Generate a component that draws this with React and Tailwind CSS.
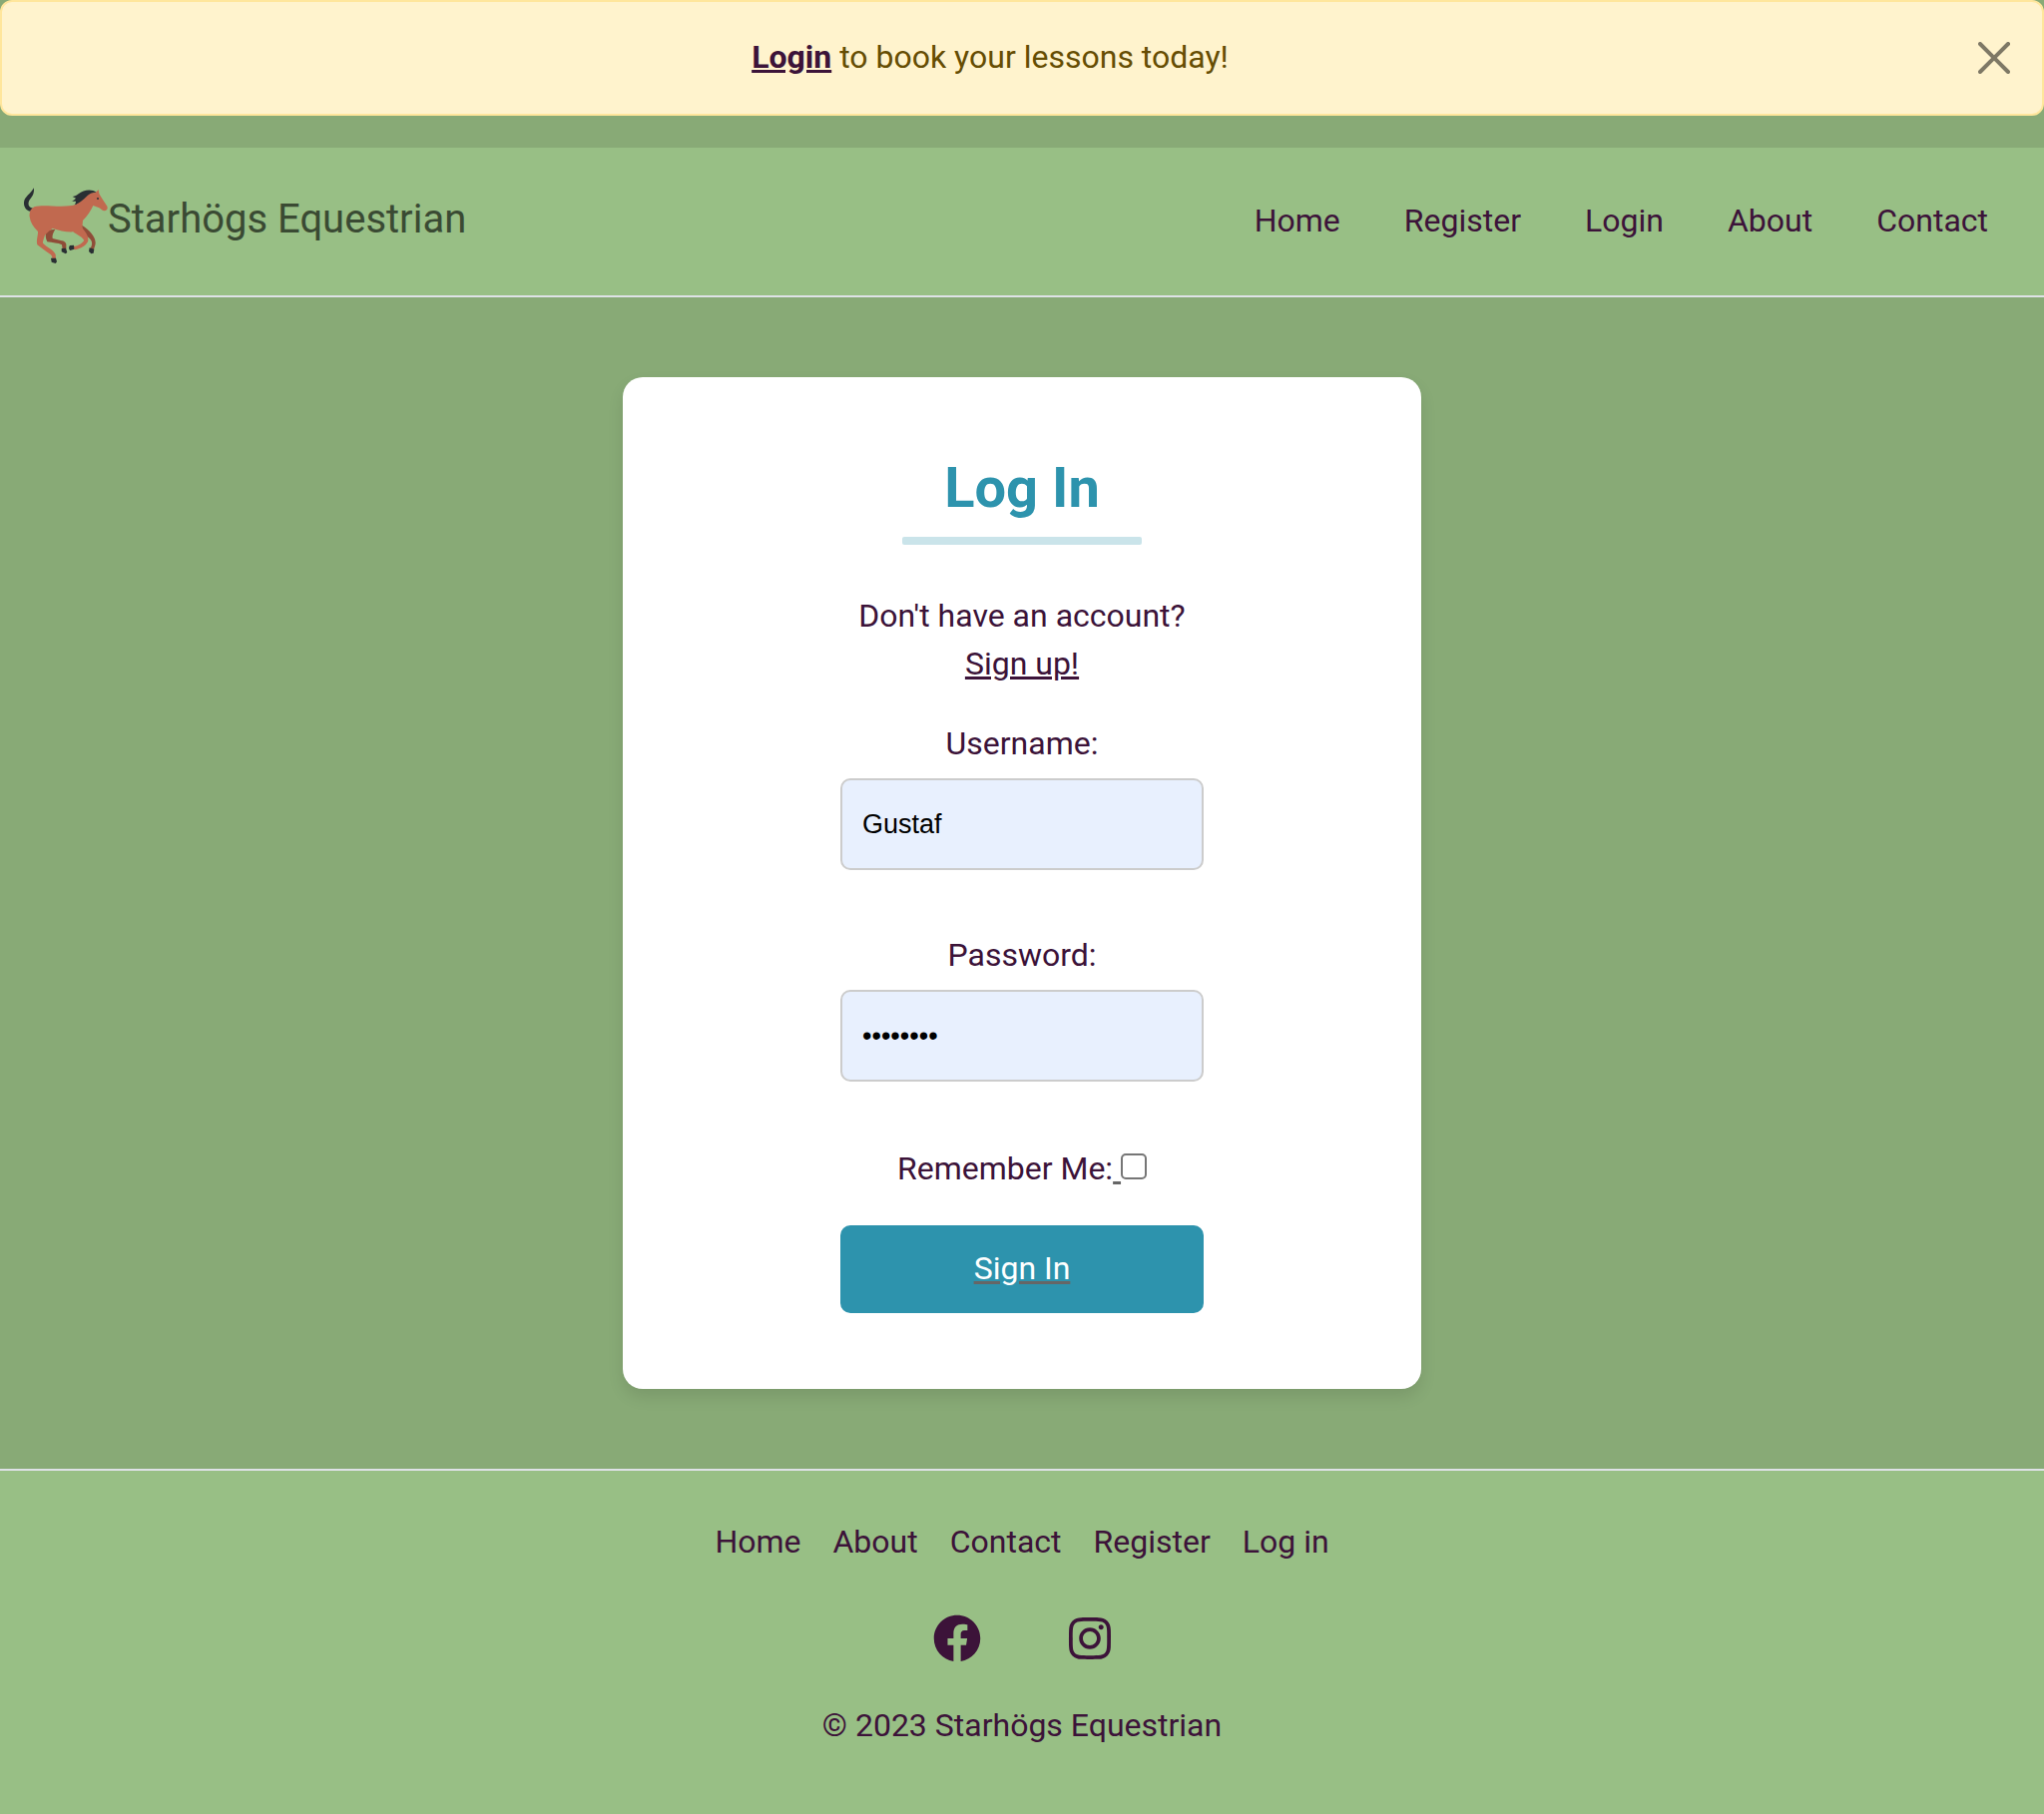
import { FaFacebook, FaInstagram } from "react-icons/fa";

const navLinks = ["Home", "Register", "Login", "About", "Contact"];
const footerLinks = ["Home", "About", "Contact", "Register", "Log in"];

function Horse() {
  return (
    <svg viewBox="42 15 252 252" className="size-[84px] shrink-0 overflow-visible" aria-hidden="true">
      <path fill="#8f4c38" d="M109 168 C106 182 107 192 112 202 C128 205 145 205 156 211 L158 224 L169 223 L169 209 C166 202 162 200 156 199 L128 192 C126 182 130 174 136 164 Z" />
      <path fill="#8f4c38" d="M216 152 C238 166 256 184 257 204 C257 212 254 218 252 225 L241 223 C247 213 248 205 244 198 C240 190 226 184 218 172 Z" />
      <path fill="#292f33" d="M72 40 C62 58 44 66 42 83 C41 98 50 108 61 110 L70 101 C59 100 54 92 56 83 C58 72 74 66 72 40 Z" />
      <path fill="#292f33" d="M260 53 C245 42 221 45 206 58 C199 64 193 66 188 66 L198 71 C193 76 189 79 185 80 L198 80 C198 85 196 89 193 92 C208 89 225 76 236 63 C244 56 252 54 260 53 Z" />
      <path fill="#c1694f" d="M257 54 C260 51 263 49 266 45 C267 51 267 55 269 59 C275 69 284 82 292 95 C295 102 291 108 284 109 C277 109 275 103 268 100 L250 93 C243 109 234 122 219 138 L217 160 C230 176 238 188 234 202 C228 213 213 223 196 226 L184 221 L186 216 C201 216 213 211 223 198 C216 185 198 180 190 172 C170 173 148 169 128 161 C119 170 106 176 103 188 C100 197 98 203 99 206 C111 219 132 226 137 240 L138 254 L127 254 C128 240 119 238 108 230 L82 211 C78 199 85 181 84 171 C70 158 61 144 59 127 C57 113 62 103 73 97 C103 88 140 100 186 93 C206 90 219 76 234 62 C241 56 249 54 257 54 Z" />
      <path fill="#292f33" d="M123 251 L138 251 L141 262 L137 267 L125 263 Z" />
      <path fill="#292f33" d="M155 222 L168 221 L172 234 L167 238 L155 232 Z" />
      <path fill="#292f33" d="M192 212 L193 224 L181 228 C176 226 176 217 180 213 Z" />
      <path fill="#292f33" d="M239 220 L253 224 L251 236 L244 238 L237 231 Z" />
      <circle cx="264" cy="72" r="3" fill="#292f33" />
    </svg>
  );
}

function Field({ id, label, type, value, autoComplete }) {
  return (
    <div className="flex flex-col items-center gap-[11px]">
      <label htmlFor={id}>{label}</label>
      <input
        id={id}
        type={type}
        defaultValue={value}
        autoComplete={autoComplete}
        className="h-[92px] w-[364px] rounded-[10px] border-2 border-[#ccc] bg-[#e8f0fe] px-5 font-['Liberation_Sans',Arial,sans-serif] text-[27px] text-black"
      />
    </div>
  );
}

export default function App() {
  return (
    <div className="flex min-h-screen flex-col bg-[#88aa76] font-[Roboto,sans-serif] text-[32px] leading-[48px] text-[#3c1339]">
      <div role="alert" className="mb-8 flex items-center rounded-xl border-2 border-[#ffe69c] bg-[#fff3cd] px-8 py-8 text-[#664d03]">
        <p className="flex-1 pb-0.5 text-center leading-[46px]">
          <a href="#login" className="font-bold text-[#3c1339] underline">Login</a> to book your lessons today!
        </p>
        <button type="button" aria-label="Close" className="ml-8 opacity-50">
          <svg viewBox="0 0 16 16" className="size-8" fill="#000">
            <path d="M.293.293a1 1 0 0 1 1.414 0L8 6.586 14.293.293a1 1 0 1 1 1.414 1.414L9.414 8l6.293 6.293a1 1 0 0 1-1.414 1.414L8 9.414l-6.293 6.293a1 1 0 0 1-1.414-1.414L6.586 8 .293 1.707a1 1 0 0 1 0-1.414z" />
          </svg>
        </button>
      </div>

      <header className="flex items-center justify-between border-b-2 border-[#dee2e6] bg-[#98bf85] py-8 pr-14 pl-6">
        <a href="#home" className="flex items-center text-[40px] text-[#3a4a33]">
          <Horse />
          <span className="pb-1">Starhögs Equestrian</span>
        </a>
        <nav className="flex gap-16 pb-0.5">
          {navLinks.map((name) => (
            <a key={name} href={`#${name.toLowerCase()}`}>{name}</a>
          ))}
        </nav>
      </header>

      <main className="flex justify-center py-20">
        <form className="flex w-[800px] flex-col items-center rounded-[20px] bg-white pt-20 pb-[76px] text-center shadow-[0_8px_16px_rgba(0,0,0,0.1)]">
          <h1 className="text-[56px] leading-[62px] font-bold text-[#2d93ad]">Log In</h1>
          <div className="mt-[18px] h-2 w-60 rounded-[2px] bg-[#cae4ea]" />
          <p className="mt-[47px] mb-8">
            Don't have an account?
            <br />
            <a href="#signup" className="underline">Sign up!</a>
          </p>
          <div className="flex flex-col gap-[61px]">
            <Field id="username" label="Username:" type="text" value="Gustaf" autoComplete="username" />
            <Field id="password" label="Password:" type="password" value="password" autoComplete="current-password" />
          </div>
          <div className="mt-[63px] flex items-center">
            <label htmlFor="remember">Remember Me:</label>
            <span className="whitespace-pre underline decoration-[#666]"> </span>
            <input
              id="remember"
              type="checkbox"
              className="mb-1 size-[26px] appearance-none rounded-[5px] border-2 border-[#767676] bg-white checked:bg-[#2d93ad]"
            />
          </div>
          <button
            type="submit"
            className="mt-[33px] h-[88px] w-[364px] rounded-[10px] bg-[#2d93ad] pb-0.5 text-white underline decoration-[#666]"
          >
            Sign In
          </button>
        </form>
      </main>

      <footer className="flex flex-1 flex-col items-center border-t-2 border-[#dee2e6] bg-[#98bf85] pt-[47px] pb-16">
        <nav className="flex gap-8">
          {footerLinks.map((name) => (
            <a key={name} href={`#${name.toLowerCase().replace(" ", "")}`}>{name}</a>
          ))}
        </nav>
        <div className="mt-[49px] flex gap-[85px] pl-0.5">
          <a href="#facebook" aria-label="Facebook"><FaFacebook className="size-12" /></a>
          <a href="#instagram" aria-label="Instagram"><FaInstagram className="size-12" /></a>
        </div>
        <p className="mt-[39px]">© 2023 Starhögs Equestrian</p>
      </footer>
    </div>
  );
}
